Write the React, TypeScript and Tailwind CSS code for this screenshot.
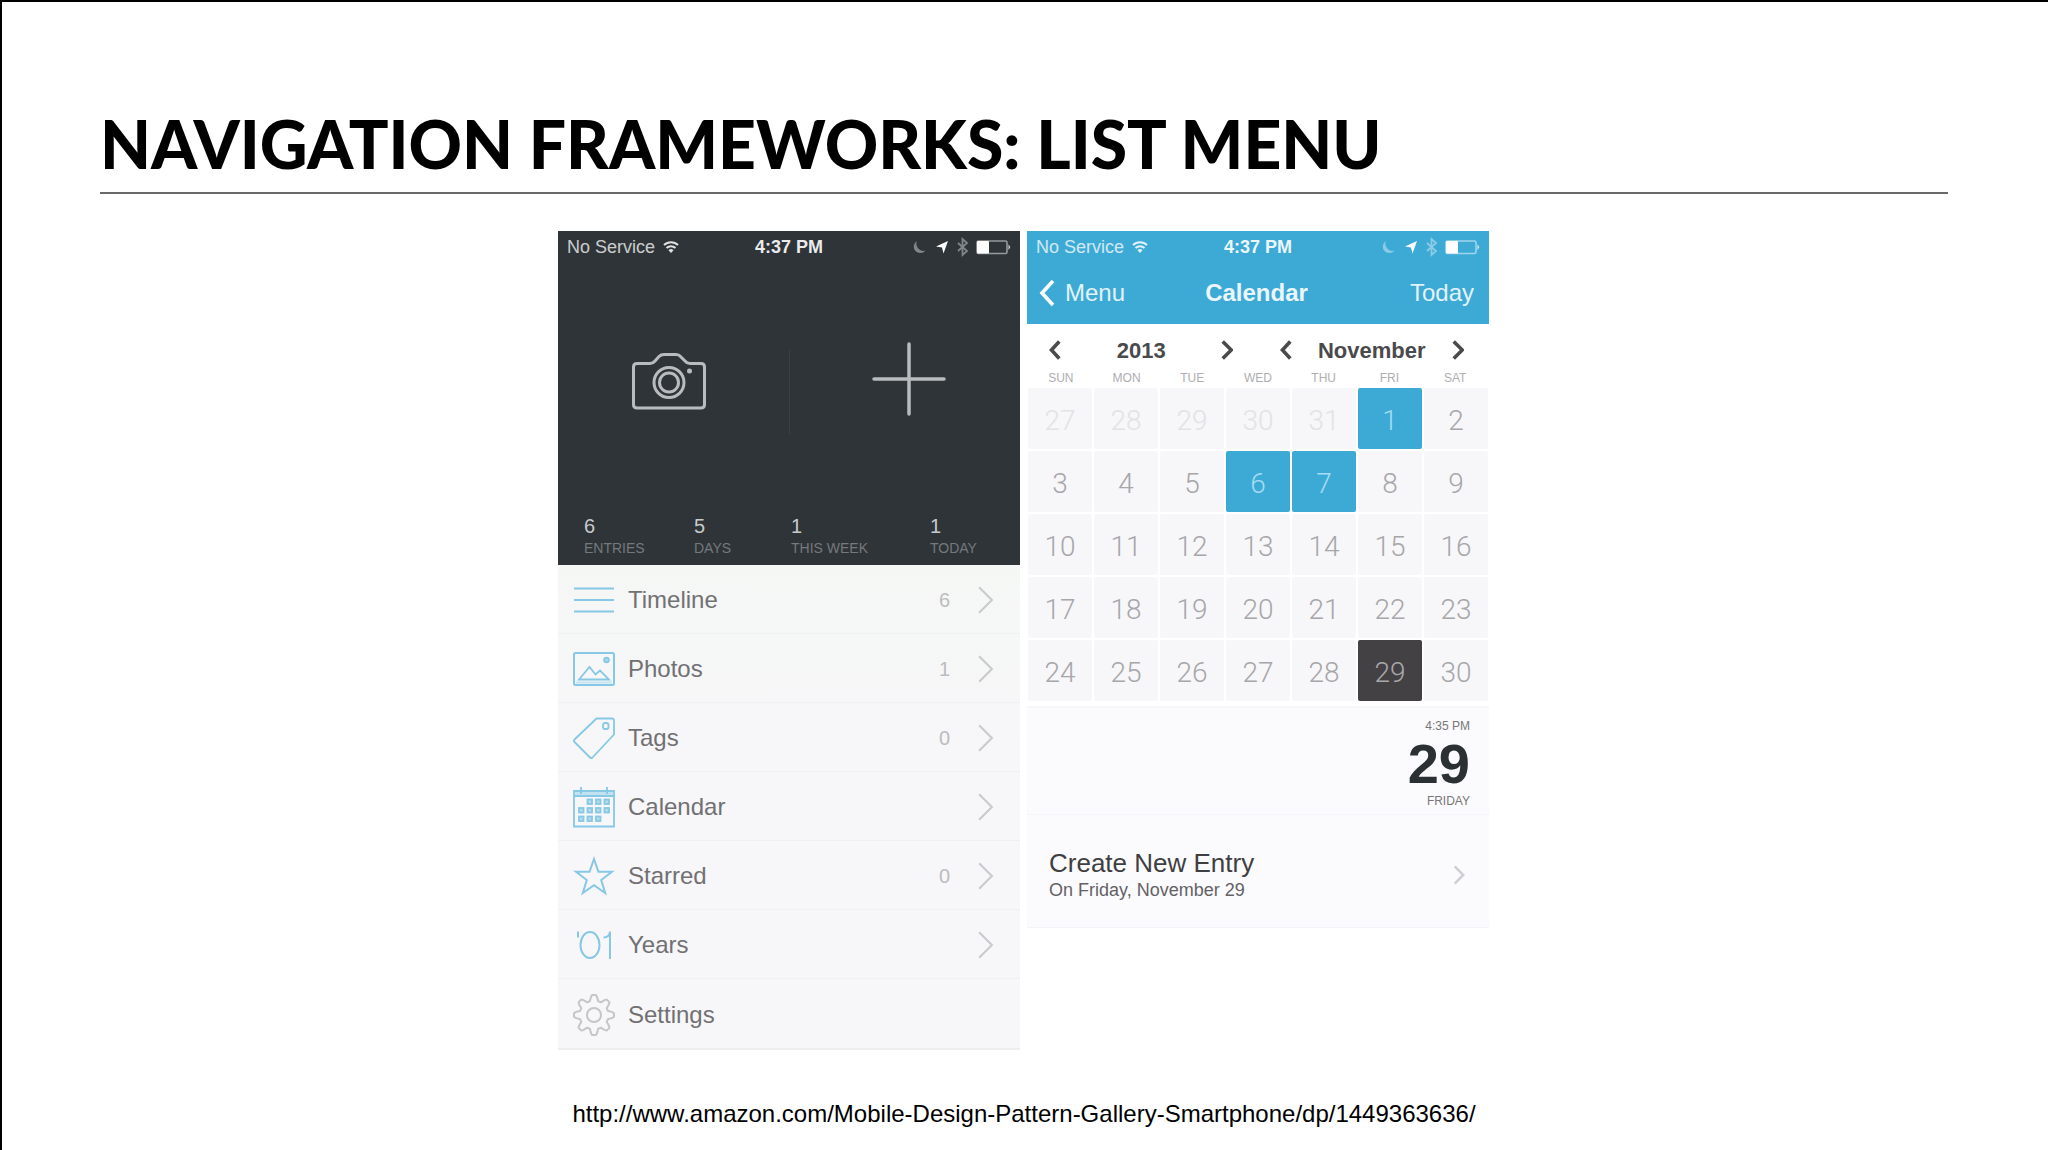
import type { ReactNode } from 'react'

type MenuItem = {
  label: string
  icon: ReactNode
  count?: number
  arrow?: boolean
}

const WEEKDAYS = ['SUN', 'MON', 'TUE', 'WED', 'THU', 'FRI', 'SAT']

const DAYS = [
  27, 28, 29, 30, 31, 1, 2,
  3, 4, 5, 6, 7, 8, 9,
  10, 11, 12, 13, 14, 15, 16,
  17, 18, 19, 20, 21, 22, 23,
  24, 25, 26, 27, 28, 29, 30,
]

const ENTRY_DAYS = [1, 6, 7]

const STATS = [
  { value: 6, label: 'ENTRIES' },
  { value: 5, label: 'DAYS' },
  { value: 1, label: 'THIS WEEK' },
  { value: 1, label: 'TODAY' },
]

const iconProps = {
  viewBox: '0 0 42 42',
  className: 'h-[42px] w-[42px] shrink-0',
  fill: 'none',
  stroke: '#86c8e5',
  strokeWidth: 1.8,
  'aria-hidden': true,
} as const

// eight rounded teeth around the centre of a 42x42 box
const GEAR_POINTS = Array.from({ length: 128 }, (_, i) => {
  const angle = (i / 128) * Math.PI * 2
  const tooth = Math.max(-1, Math.min(1, 1.5 * Math.cos(angle * 8)))
  const r = 17.2 + 2.8 * tooth
  return `${(21 + r * Math.cos(angle)).toFixed(2)},${(21 + r * Math.sin(angle)).toFixed(2)}`
}).join(' ')

const TimelineIcon = () => (
  <svg {...iconProps} strokeWidth={2}>
    <path d="M1 9.5h40M1 21h40M1 32.5h40" />
  </svg>
)

const PhotosIcon = () => (
  <svg {...iconProps}>
    <rect x="1" y="5" width="40" height="32" rx="1.5" strokeWidth="2" />
    <circle cx="33.5" cy="12" r="2.4" fill="#a9d8ed" />
    <path d="M6 31.5L16.500 19l6 7.500 4.500-4 9 9z" />
    <path d="M3 34.5h36" stroke="#c6e4f2" />
  </svg>
)

const TagsIcon = () => (
  <svg {...iconProps} strokeLinejoin="round">
    <path d="M23.500 1.500H39a2 2 0 0 1 2 2V17.500L19.500 40.500a1.800 1.800 0 0 1-2.500 0L1.500 25a1.800 1.800 0 0 1 0-2.500z" />
    <rect x="30" y="6" width="5.5" height="6" rx="2" />
  </svg>
)

const CalendarIcon = () => (
  <svg {...iconProps}>
    <path d="M1 5h40v35.500H1zM1 10h40" />
    <path d="M2 7.500h38" stroke="#c0e2f1" strokeWidth="3" />
    <path d="M8 1v7M34 1v7" />
    {[
      [14.5, 13.5], [23, 13.5], [31.5, 13.5],
      [6, 22], [14.5, 22], [23, 22], [31.5, 22],
      [6, 30.5], [14.5, 30.5], [23, 30.5],
    ].map(([x, y]) => (
      <rect key={`${x}-${y}`} x={x} y={y} width="4.5" height="4.5" fill="#b4dcee" />
    ))}
  </svg>
)

const StarIcon = () => (
  <svg {...iconProps} strokeWidth={2}>
    <path d="M21 4l4.400 12.700H39L28.200 25l4 13L21 30.300 9.800 38l4-13L3 16.700h13.600z" />
  </svg>
)

const YearsIcon = () => (
  <svg {...iconProps} strokeWidth={2}>
    <path d="M5 7.500v6" />
    <ellipse cx="17" cy="21" rx="9.5" ry="13" />
    <path d="M30.500 13.500c4 0 6-2 6.500-6V35" />
  </svg>
)

const SettingsIcon = () => (
  <svg {...iconProps} stroke="#c6c6c8" strokeWidth={2} strokeLinejoin="round">
    <circle cx="21" cy="21" r="7" />
    <polygon points={GEAR_POINTS} />
  </svg>
)

const MENU: MenuItem[] = [
  { label: 'Timeline', icon: <TimelineIcon />, count: 6, arrow: true },
  { label: 'Photos', icon: <PhotosIcon />, count: 1, arrow: true },
  { label: 'Tags', icon: <TagsIcon />, count: 0, arrow: true },
  { label: 'Calendar', icon: <CalendarIcon />, arrow: true },
  { label: 'Starred', icon: <StarIcon />, count: 0, arrow: true },
  { label: 'Years', icon: <YearsIcon />, arrow: true },
  { label: 'Settings', icon: <SettingsIcon /> },
]

function StatusBar() {
  return (
    <div className="grid h-8 grid-cols-[1fr_auto_1fr] items-center px-[9px] text-lg leading-none text-white">
      <div className="flex items-center gap-2">
        <span className="opacity-75">No Service</span>
        <svg viewBox="0 0 16 12" className="h-3 w-4 opacity-85" fill="none" stroke="white" strokeWidth="2" aria-hidden="true">
          <path d="M1 4a10 10 0 0 1 14 0M3.500 7a6.500 6.500 0 0 1 9 0" />
          <path d="M5.500 9.200a3.600 3.600 0 0 1 5 0L8 12z" fill="white" stroke="none" />
        </svg>
      </div>
      <span className="font-bold opacity-90">4:37 PM</span>
      <svg viewBox="0 0 100 20" className="h-5 w-[100px] justify-self-end" fill="none" stroke="white" aria-hidden="true">
        <path d="M6 4a6.500 6.500 0 1 0 8.500 9.500A7 7 0 0 1 6 4z" fill="white" stroke="none" opacity=".4" />
        <path d="M37 4L32.500 16.500l-1.500-6-6-1z" fill="white" stroke="none" />
        <path d="M47 6l9 8-4.500 4V2l4.500 4-9 8" strokeWidth="1.8" opacity=".4" />
        <rect x="66" y="4" width="30" height="12.500" rx="1.5" strokeWidth="1.6" opacity=".5" />
        <rect x="66" y="4" width="12" height="12.500" rx="1" fill="white" stroke="none" />
        <path d="M97.500 7.500q3 2.700 0 5.400z" fill="white" stroke="none" opacity=".8" />
      </svg>
    </div>
  )
}

function Chevron({ direction, className }: { direction: 'left' | 'right'; className: string }) {
  return (
    <svg viewBox="0 0 16 28" className={className} fill="none" stroke="currentColor" aria-hidden="true">
      <path d={direction === 'left' ? 'M14 2L3 14l11 12' : 'M2 2l12 12L2 26'} />
    </svg>
  )
}

function MenuScreen() {
  return (
    <section aria-label="Menu screen">
      <div className="bg-[#2e3438]">
        <StatusBar />
        <div className="flex h-[251px]">
          <button type="button" aria-label="Camera" className="flex flex-1 items-center justify-center pr-2 pb-[18px]">
            <svg viewBox="0 0 74 74" className="h-[74px] w-[74px]" fill="none" stroke="#b9bcbf" strokeWidth="3" strokeLinejoin="round">
              <path d="M4.500 20.500H18q3 0 5-2.500l4-4.500Q29 11.500 32 11.500H44q3 0 4.500 2l4.500 4.500q2 2.500 5 2.500H69q3.500 0 3.500 3.500V61.500q0 3.500-3.500 3.500H5q-3.500 0-3.500-3.500V24q0-3.500 3.500-3.500z" />
              <circle cx="37" cy="39.5" r="15" />
              <circle cx="37" cy="39.5" r="9.5" />
              <circle cx="57.5" cy="28" r="2.5" fill="#b9bcbf" stroke="none" />
            </svg>
          </button>
          <div className="mt-[87px] h-[84px] w-px bg-[#3b3f43]" />
          <button type="button" aria-label="New entry" className="flex flex-1 items-center justify-center pb-5 pl-2">
            <svg viewBox="0 0 74 74" className="h-[74px] w-[74px]" stroke="#b9bcbf" strokeWidth="3.5" strokeLinecap="round">
              <path d="M37 2v70M2 37h70" />
            </svg>
          </button>
        </div>
        <dl className="grid grid-cols-[110fr_97fr_139fr_90fr] pb-[7px] pl-[26px]">
          {STATS.map((stat) => (
            <div key={stat.label} className="flex flex-col-reverse">
              <dt className="text-sm leading-5 text-[#75797d]">{stat.label}</dt>
              <dd className="text-xl leading-6 text-[#c8cacc]">{stat.value}</dd>
            </div>
          ))}
        </dl>
      </div>

      <nav className="border-b-2 border-[#eeedf0] bg-linear-to-b from-[#f5f7f5] to-[#f7f6f9] to-40%">
        {MENU.map((item) => (
          <a
            key={item.label}
            href={`#${item.label.toLowerCase()}`}
            className="flex h-[69px] items-center border-b border-[#f0f0f2] pt-0.5 pr-[26px] pl-[15px] text-2xl text-[#717173] last:border-b-0"
          >
            {item.icon}
            <span className="ml-[13px] flex-1">{item.label}</span>
            {item.count !== undefined && <span className="text-xl text-[#bcbcbe]">{item.count}</span>}
            {item.arrow && <Chevron direction="right" className="ml-[27px] h-[30px] w-[17px] stroke-2 text-[#cbcbcd]" />}
          </a>
        ))}
      </nav>
    </section>
  )
}

function Stepper({ label, name }: { label: string; name: string }) {
  return (
    <div className="flex flex-1 items-center justify-between">
      <button type="button" aria-label={`Previous ${name}`}>
        <Chevron direction="left" className="h-5 w-3 stroke-[5]" />
      </button>
      <span>{label}</span>
      <button type="button" aria-label={`Next ${name}`}>
        <Chevron direction="right" className="h-5 w-3 stroke-[5]" />
      </button>
    </div>
  )
}

function dayClass(day: number, index: number) {
  if (index < 5) return 'bg-[#f7f6f8] text-[#e3e2e5]'
  if (ENTRY_DAYS.includes(day)) return 'bg-[#3daad6] text-[#a6dcf2]'
  if (day === 29) return 'bg-[#434144] text-[#aaa8ab]'
  return 'bg-[#f7f6f9] text-[#a7a6a9]'
}

function CalendarScreen() {
  return (
    <section aria-label="Calendar screen">
      <header className="bg-[#3daad6] text-white">
        <StatusBar />
        <div className="grid h-[61px] grid-cols-[1fr_auto_1fr] items-center pr-[15px] pb-0.5 pl-3 text-2xl">
          <button type="button" className="flex items-center gap-[10px]">
            <Chevron direction="left" className="h-7 w-4 stroke-[3.6]" />
            <span className="opacity-85">Menu</span>
          </button>
          <h2 className="font-bold opacity-90">Calendar</h2>
          <button type="button" className="justify-self-end opacity-85">Today</button>
        </div>
      </header>

      <div className="flex h-12 items-center gap-[46px] pt-1 pr-[25px] pl-[22px] text-[22px] font-bold text-[#4a494b]">
        <Stepper label="2013" name="year" />
        <Stepper label="November" name="month" />
      </div>

      <table className="block w-full">
        <thead className="block">
          <tr className="grid h-4 grid-cols-7 items-start px-px">
            {WEEKDAYS.map((day) => (
              <th key={day} scope="col" className="text-xs leading-none font-normal text-[#aeadb0]">{day}</th>
            ))}
          </tr>
        </thead>
        <tbody className="grid gap-0.5 px-px">
          {[0, 7, 14, 21, 28].map((start) => (
            <tr key={start} className="grid grid-cols-7 gap-0.5">
              {DAYS.slice(start, start + 7).map((day, i) => (
                <td
                  key={day}
                  className={`flex h-[61px] items-center justify-center rounded-xs pt-1 font-[Roboto,sans-serif] text-[28px] font-light ${dayClass(day, start + i)}`}
                >
                  {day}
                </td>
              ))}
            </tr>
          ))}
        </tbody>
      </table>

      <div className="mt-[5px] flex h-[109px] flex-col items-end border-t-2 border-b border-t-[#f6f5f8] border-b-[#f5f4f8] bg-[#fbfafd] pt-[10px] pr-[19px] text-xs text-[#777779]">
        <time>4:35 PM</time>
        <strong className="text-[56px] leading-[59px] text-[#2b3032]">29</strong>
        <span>FRIDAY</span>
      </div>

      <a href="#new-entry" className="flex h-[113px] items-center justify-between border-b border-[#f5f4f8] bg-[#fbfafd] pt-2 pr-6 pl-[22px]">
        <span className="flex flex-col">
          <span className="text-[26px] leading-[30px] text-[#3f3f41]">Create New Entry</span>
          <span className="text-lg leading-6 text-[#636265]">On Friday, November 29</span>
        </span>
        <Chevron direction="right" className="h-5 w-3 stroke-[3.5] text-[#cfced2]" />
      </a>
    </section>
  )
}

export default function App() {
  return (
    <main className="flex min-h-screen flex-col border-t-2 border-l-2 border-black bg-white pr-[100px] pl-[98px] font-['Liberation_Sans',Arial,sans-serif]">
      <h1 className="border-b-2 border-[#696969] pt-[103px] pb-[9px] font-[Lato,sans-serif] text-[66px] leading-[78px] font-black text-black">
        NAVIGATION FRAMEWORKS: LIST MENU
      </h1>

      <div className="mx-auto mt-[37px] grid w-full max-w-[932px] grid-cols-2 items-start gap-[7px] pr-px">
        <MenuScreen />
        <CalendarScreen />
      </div>

      <footer className="mt-12 pb-5 text-center text-2xl leading-8">
        <a href="http://www.amazon.com/Mobile-Design-Pattern-Gallery-Smartphone/dp/1449363636/" className="text-black">
          http://www.amazon.com/Mobile-Design-Pattern-Gallery-Smartphone/dp/1449363636/
        </a>
      </footer>
    </main>
  )
}
